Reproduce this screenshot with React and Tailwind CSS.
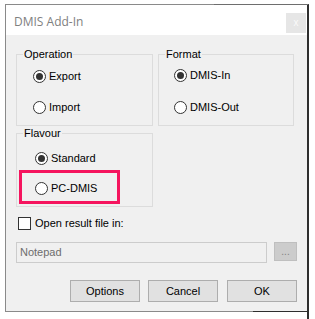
import React from "react";

function Radio({ checked, label, gap = "gap-[3px]" }) {
  return (
    <div className={`flex items-center h-[13px] ${gap}`}>
      <div className="w-[13px] h-[13px] rounded-full border border-[#333333] bg-white flex items-center justify-center shrink-0">
        {checked && <div className="w-[7px] h-[7px] rounded-full bg-[#333333]" />}
      </div>
      <span className="text-[11px] leading-[13px] text-black whitespace-nowrap">{label}</span>
    </div>
  );
}

function Group({ title, className, children }) {
  return (
    <div className={`relative border border-[#dcdcdc] ${className}`}>
      <span className="absolute top-[-7px] left-[6px] px-[1px] bg-[#f0f0f0] text-[11px] leading-[13px] text-black">
        {title}
      </span>
      {children}
    </div>
  );
}

export default function App() {
  return (
    <div
      className="relative w-[315px] h-[319px] bg-white overflow-hidden pl-[5px] pt-[4px]"
      style={{ fontFamily: '"Liberation Sans", Arial, sans-serif' }}
    >
      <div className="relative w-[304px] h-[308px] flex flex-col border border-[#8a8a8a] border-r-2 border-r-[#2e2e2e]">
        <div className="absolute top-[-1px] left-[208px] right-0 h-[1px] bg-[#6e6e6e]" />
        {/* Title bar */}
        <div className="h-[30px] bg-white flex items-start justify-between shrink-0">
          <span
            className="pl-[8px] pt-[9px] text-[12px] leading-[16px] text-[#808080]"
            style={{ fontFamily: '"Open Sans", "Noto Sans", sans-serif' }}
          >
            DMIS Add-In
          </span>
          <div className="mt-[8px] mr-[1px] w-[20px] h-[20px] bg-[#e6e6e6] flex items-center justify-center text-[10px] leading-none text-[#fafafa]">
            x
          </div>
        </div>
        {/* Body */}
        <div className="flex-1 bg-[#f0f0f0] pl-[10px] pr-[10px] pt-[19px] flex flex-col">
          <div className="flex gap-[5px]">
            <Group title="Operation" className="w-[137px] h-[72px] pl-[16px] pt-[15px] flex flex-col gap-[18px]">
              <Radio checked label="Export" />
              <Radio label="Import" />
            </Group>
            <Group title="Format" className="w-[136px] h-[72px] pl-[15px] pt-[14px] flex flex-col gap-[19px]">
              <Radio checked label="DMIS-In" />
              <Radio label="DMIS-Out" />
            </Group>
          </div>
          <Group title="Flavour" className="mt-[7px] w-[137px] h-[74px] pl-[18px] pt-[18px] flex flex-col gap-[17px]">
            <Radio checked label="Standard" />
            <Radio label="PC-DMIS" />
            <div className="absolute left-[2px] top-[36px] w-[101px] h-[34px] border-[3px] border-[#f5145e]" />
          </Group>
          <div className="mt-[10px] ml-[2px] flex items-center gap-[4px] h-[13px]">
            <div className="w-[13px] h-[13px] border border-[#333333] bg-white shrink-0" />
            <span className="text-[11px] leading-[13px] text-black">Open result file in:</span>
          </div>
          <div className="mt-[12px] flex items-start gap-[7px]">
            <div className="w-[251px] h-[21px] border border-[#cccccc] bg-[#f0f0f0] flex items-center pl-[3px] text-[11px] text-[#6d6d6d]">
              Notepad
            </div>
            <div className="w-[23px] h-[19px] border border-[#bfbfbf] bg-[#cccccc] flex items-center justify-center text-[10px] leading-none text-[#838383]">
              ...
            </div>
          </div>
          <div className="mt-[17px] flex justify-end">
            <div className="w-[70px] h-[22px] border border-[#adadad] bg-[#e1e1e1] flex items-center justify-center text-[11px] text-black">
              Options
            </div>
            <div className="ml-[8px] w-[70px] h-[22px] border border-[#adadad] bg-[#e1e1e1] flex items-center justify-center text-[11px] text-black">
              Cancel
            </div>
            <div className="ml-[9px] w-[70px] h-[22px] border border-[#adadad] bg-[#e1e1e1] flex items-center justify-center text-[11px] text-black">
              OK
            </div>
          </div>
        </div>
      </div>
      <div className="absolute left-[253px] top-[311px] w-[55px] h-[1px] bg-[#2e2e2e]" />
      <div className="absolute left-[307px] top-[311px] w-[2px] h-[8px] bg-[#2e2e2e]" />
    </div>
  );
}
